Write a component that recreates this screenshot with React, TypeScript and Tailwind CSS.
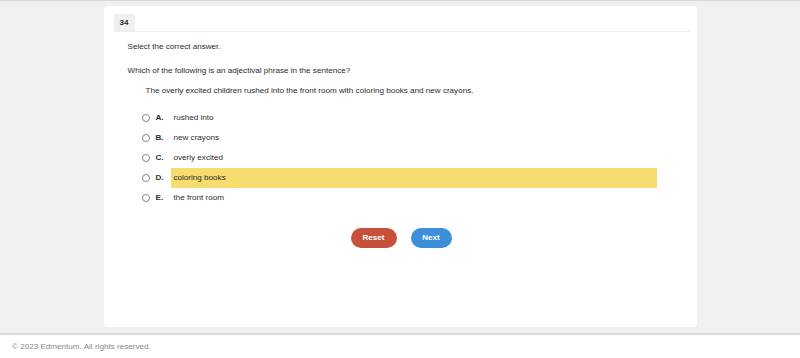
import React from "react";

const options = [
  { l: "A.", t: "rushed into", hl: false },
  { l: "B.", t: "new crayons", hl: false },
  { l: "C.", t: "overly excited", hl: false },
  { l: "D.", t: "coloring books", hl: true },
  { l: "E.", t: "the front room", hl: false },
];

export default function App() {
  return (
    <div
      className="w-[800px] h-[358px] flex flex-col bg-[#f0f0f0] text-[#2b2b2b] overflow-hidden"
      style={{ fontFamily: '"Liberation Sans", Arial, sans-serif' }}
    >
      <div className="h-[1px] bg-[#d9d9d9]" />
      <div className="h-[332px] pt-[5px]">
        <div className="mx-auto w-[593px] h-[321px] bg-white rounded-[3px] pt-[8px]">
          <div className="ml-[10px] mr-[7px] border-b border-[#eeeeee] flex">
            <div className="w-[21px] h-[17px] bg-[#f0f0f0] flex items-center justify-center font-bold text-[8px]">
              34
            </div>
          </div>
          <div className="pl-[24px] text-[8.1px]">
            <p className="mt-[9px] h-[12px] leading-[12px]">Select the correct answer.</p>
            <p className="mt-[12px] h-[12px] leading-[12px]">
              Which of the following is an adjectival phrase in the sentence?
            </p>
            <p className="mt-[8px] h-[12px] leading-[12px] pl-[18px]">
              The overly excited children rushed into the front room with coloring books and new crayons.
            </p>
            <div className="mt-[11px] flex flex-col">
              {options.map((o) => (
                <div key={o.l} className="h-[20px] flex items-center">
                  <div className="ml-[14px] w-[8px] h-[8px] rounded-full border border-[#8a8a8a] bg-white" />
                  <div className="ml-[6px] w-[15px] font-bold">{o.l}</div>
                  <div
                    className={
                      "w-[486px] h-[20px] flex items-center pl-[3px] " +
                      (o.hl ? "bg-[#f7dc6f]" : "")
                    }
                  >
                    {o.t}
                  </div>
                </div>
              ))}
            </div>
          </div>
          <div className="mt-[20px] flex justify-center gap-[14px] pl-[2px]">
            <button className="w-[46px] h-[20px] rounded-full bg-[#c7503b] text-white font-bold text-[8px]">
              Reset
            </button>
            <button className="w-[41px] h-[20px] rounded-full bg-[#3d8fd9] text-white font-bold text-[8px]">
              Next
            </button>
          </div>
        </div>
      </div>
      <div className="flex-1 border-t-2 border-[#d9d9d9] bg-white pl-[12px] pt-[6px] text-[8.1px] text-[#888]">
        © 2023 Edmentum. All rights reserved.
      </div>
    </div>
  );
}
